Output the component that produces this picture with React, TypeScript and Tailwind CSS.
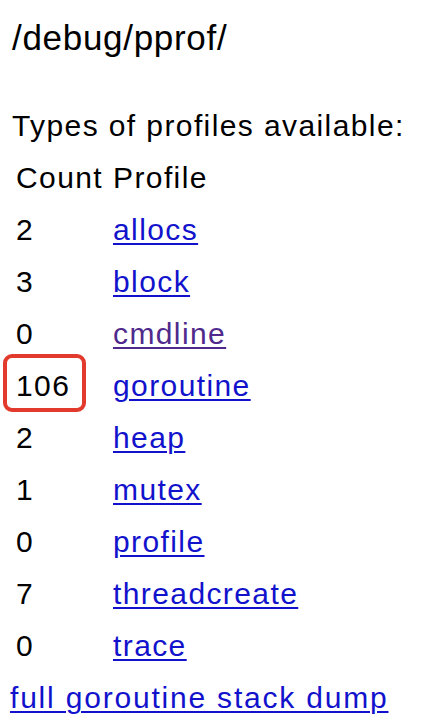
import React from "react";

const rows: { count: string; name: string; visited?: boolean }[] = [
  { count: "2", name: "allocs" },
  { count: "3", name: "block" },
  { count: "0", name: "cmdline", visited: true },
  { count: "106", name: "goroutine" },
  { count: "2", name: "heap" },
  { count: "1", name: "mutex" },
  { count: "0", name: "profile" },
  { count: "7", name: "threadcreate" },
  { count: "0", name: "trace" },
];

export default function App() {
  return (
    <div
      className="relative w-[424px] h-[728px] overflow-hidden bg-white text-black"
      style={{ fontFamily: '"Liberation Sans", Arial, sans-serif' }}
    >
      <div className="pl-[12px] text-[35px] leading-[76px] tracking-[0.7px]">/debug/pprof/</div>
      <div className="h-[24px]" />
      <div className="pl-[12px] text-[30px] leading-[52px] tracking-[1.4px]">Types of profiles available:</div>
      <div className="text-[30px] leading-[52px] tracking-[1.4px]">
        <div className="flex">
          <div className="w-[113px] pl-[16px]">Count</div>
          <div>Profile</div>
        </div>
        {rows.map((r) => (
          <div key={r.name} className="flex">
            <div className="w-[113px] pl-[16px]">{r.count}</div>
            <div>
              <a
                href="#"
                className={`underline decoration-[2px] underline-offset-[3px] ${
                  r.visited ? "text-[#4f2a8c]" : "text-[#1212cc]"
                }`}
              >
                {r.name}
              </a>
            </div>
          </div>
        ))}
      </div>
      <div className="pl-[10px] text-[30px] leading-[52px] tracking-[1.8px]">
        <a href="#" className="underline decoration-[2px] underline-offset-[3px] text-[#1212cc]">
          full goroutine stack dump
        </a>
      </div>
      <div className="absolute left-[3px] top-[354px] w-[83px] h-[58px] border-[4px] border-[#e23b2e] rounded-[9px]" />
    </div>
  );
}
